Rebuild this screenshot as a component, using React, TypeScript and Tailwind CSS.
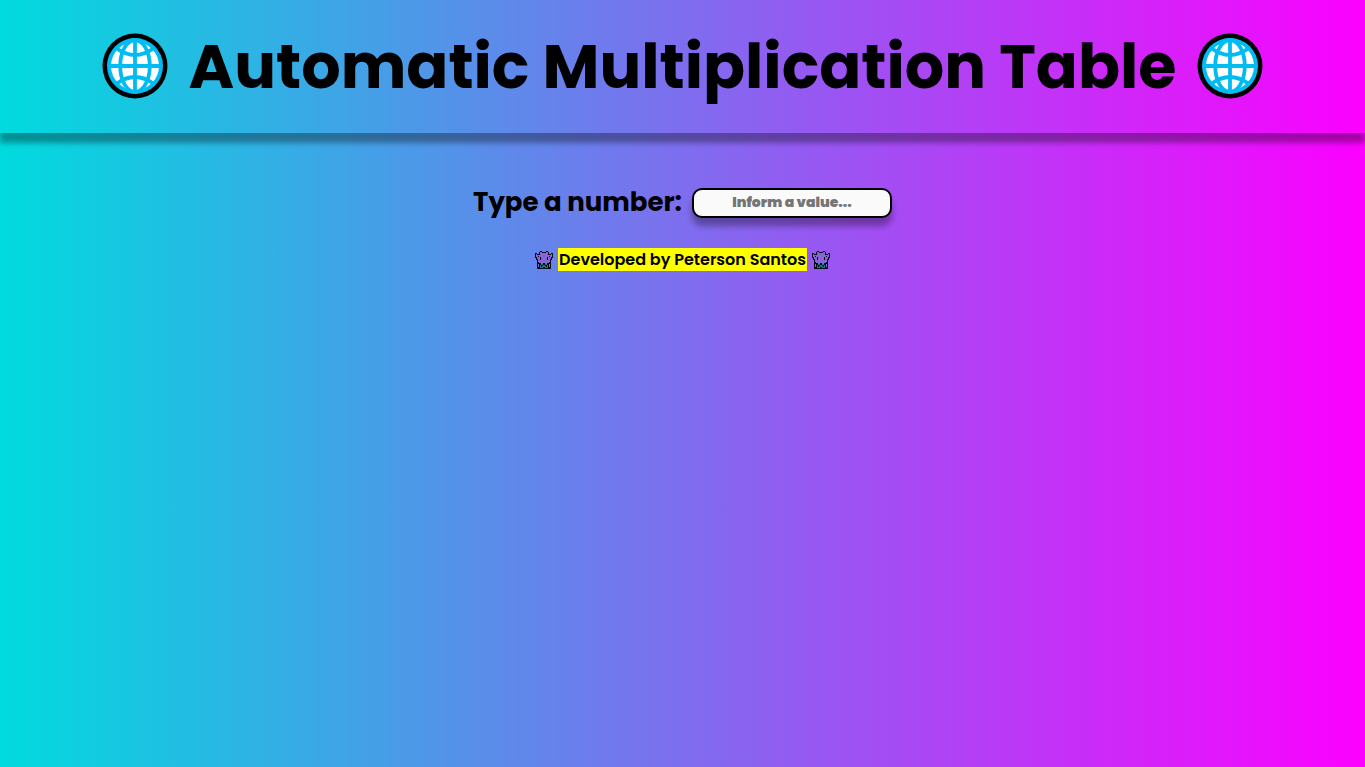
import { useState } from "react";

function Globe() {
  return (
    <svg viewBox="0 0 66 66" className="size-[66px] shrink-0" aria-hidden="true">
      <circle cx="33" cy="33" r="32.5" fill="#000" />
      <circle cx="33" cy="33" r="28" fill="#00bcf2" />
      <circle cx="33" cy="33" r="24" fill="#fff" />
      <g fill="none" stroke="#00bcf2" strokeWidth="3.8">
        <path d="M33 8V58M8 33H58" />
        <ellipse cx="33" cy="33" rx="14.8" ry="26" />
        <path d="M14 15Q33 29 52 15M14 51Q33 37 52 51" />
      </g>
    </svg>
  );
}

const sprite = [
  ".....##....##.....",
  "....#pp####pp#....",
  "##..#pppppppp#..##",
  "#p###pppppppp###p#",
  "#pppppppppppppppp#",
  "#pp#pppppppppp#pp#",
  "##ppp#pppppp#ppp##",
  ".#ppp#pppppp#ppp#.",
  ".##pp#pppppp#pp##.",
  "..#pppppppppppp#..",
  "..#pppppppppppp#..",
  "..##pppppppppp##..",
  "..####pp##pp####..",
  "..#p##tt##tt##p#..",
  "..#p#t##tt##t#p#..",
  "..#p#t#tttt#t#p#..",
  "..###ttt##ttt###..",
  "..##############..",
];

function Monster() {
  return (
    <svg viewBox="0 0 18 18" className="size-[18px] shrink-0" shapeRendering="crispEdges" aria-hidden="true">
      {sprite.flatMap((row, y) =>
        [...row].map((cell, x) =>
          cell === "." ? null : (
            <rect
              key={`${x}-${y}`}
              x={x}
              y={y}
              width="1"
              height="1"
              fill={cell === "#" ? "#0a0a14" : cell === "t" ? "#088088" : "#8764d8"}
            />
          ),
        ),
      )}
    </svg>
  );
}

export default function App() {
  const [value, setValue] = useState("");
  const number = Number(value);

  return (
    <div className="min-h-screen bg-linear-to-r/srgb from-[#00dbde] to-[#fc00ff] font-[Poppins,Inter,sans-serif] text-black">
      <header className="flex h-[133px] items-start justify-center gap-[21px] pt-[33px] shadow-[0_10px_5px_rgba(0,0,0,0.33)]">
        <Globe />
        <h1 className="text-[62px] leading-[68px] font-bold whitespace-nowrap">Automatic Multiplication Table</h1>
        <Globe />
      </header>
      <main className="flex flex-col items-center pt-[50px]">
        <div className="flex items-center gap-[10px]">
          <label htmlFor="number" className="text-[26px] leading-[38px] font-bold">
            Type a number:
          </label>
          <input
            id="number"
            type="text"
            inputMode="numeric"
            placeholder="Inform a value..."
            value={value}
            onChange={(event) => setValue(event.target.value)}
            className="mt-0.5 h-[30px] w-[200px] rounded-[10px] border-2 border-black bg-[#fafafa] pb-px text-center text-sm font-black shadow-[0_8px_6px_rgba(0,0,0,0.33)] outline-none placeholder:text-[#757575]"
          />
        </div>
        {value.trim() !== "" && Number.isFinite(number) && (
          <ul className="mt-6 text-center text-xl font-semibold">
            {Array.from({ length: 10 }, (_, i) => (
              <li key={i}>
                {number} x {i + 1} = {number * (i + 1)}
              </li>
            ))}
          </ul>
        )}
      </main>
      <footer className="mt-[27px] flex h-[23px] items-center justify-center gap-[5px]">
        <Monster />
        <p className="bg-[#ffff00] px-px text-base leading-[23px] font-semibold">Developed by Peterson Santos</p>
        <Monster />
      </footer>
    </div>
  );
}
